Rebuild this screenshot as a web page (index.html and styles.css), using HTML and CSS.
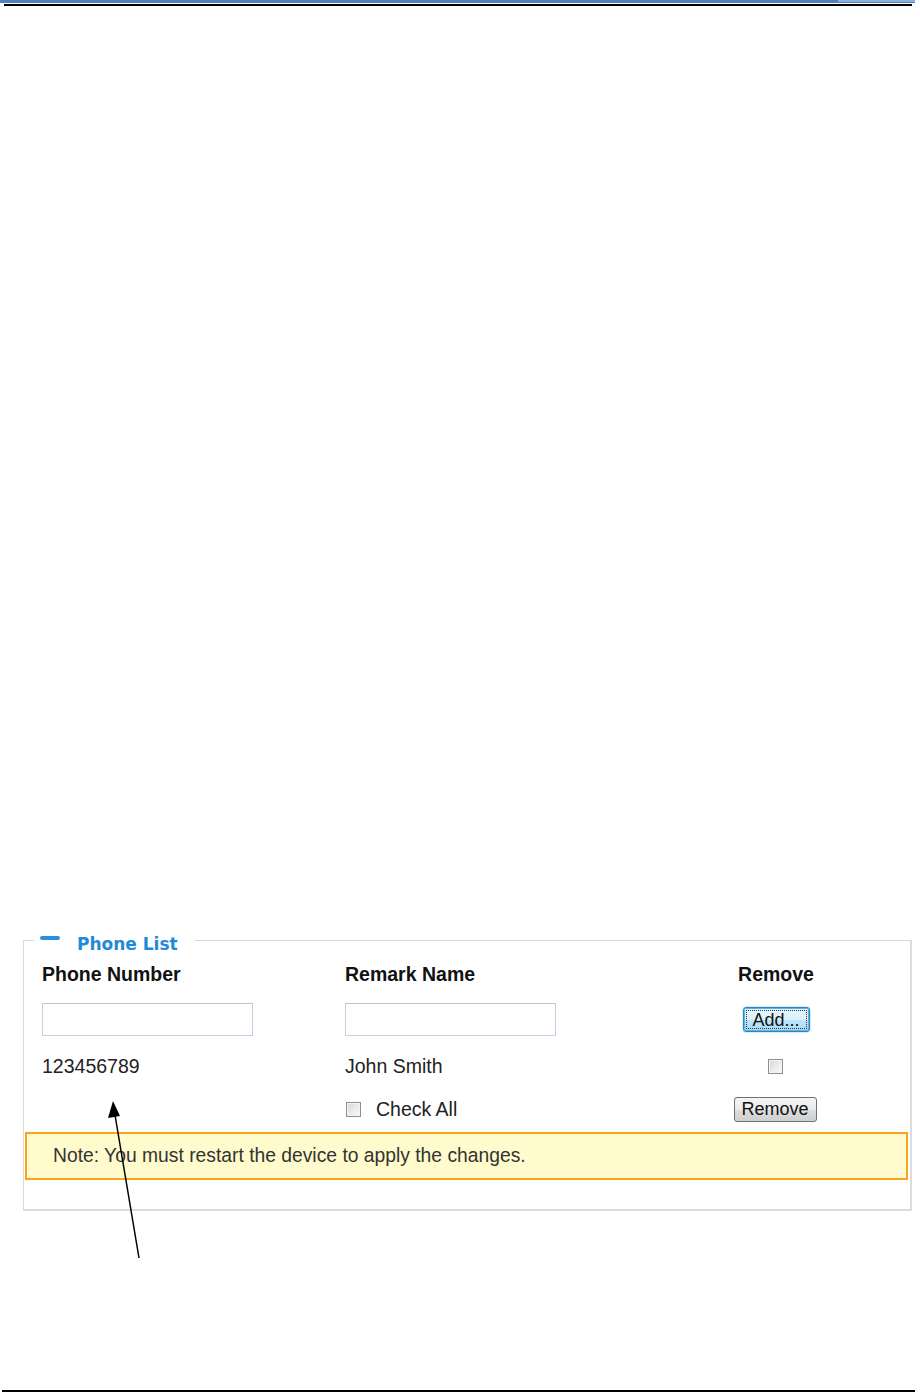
FILE: index.html
```html
<!DOCTYPE html>
<html lang="en">
<head>
<meta charset="utf-8">
<title>Phone List</title>
<link rel="stylesheet" href="styles.css">
</head>
<body>
<div class="page">
  <header class="topbar">
    <div class="band"><span class="accent"></span></div>
    <div class="rule"></div>
  </header>
  <main class="content">
    <fieldset class="phone-list">
      <legend class="legend"><span class="dash"></span><span class="legend-text">Phone List</span></legend>
      <div class="table">
        <div class="row head">
          <div class="c1">Phone Number</div>
          <div class="c2">Remark Name</div>
          <div class="c3">Remove</div>
        </div>
        <div class="row inputs">
          <div class="c1"><input class="field" type="text"></div>
          <div class="c2"><input class="field" type="text"></div>
          <div class="c3"><button class="btn btn-focus" type="button"><span class="focus-ring">Add...</span></button></div>
        </div>
        <div class="row data">
          <div class="c1">123456789</div>
          <div class="c2">John Smith</div>
          <div class="c3"><input class="chk" type="checkbox"></div>
        </div>
        <div class="row check">
          <div class="c1"></div>
          <label class="c2 check-all"><input class="chk" type="checkbox"><span>Check All</span></label>
          <div class="c3"><button class="btn btn-remove" type="button">Remove</button></div>
        </div>
      </div>
      <div class="note">Note: You must restart the device to apply the changes.</div>
    </fieldset>
    <svg class="arrow" width="40" height="170" viewBox="0 0 40 170">
      <line x1="36" y1="163" x2="12" y2="20" stroke="#000" stroke-width="1.5"/>
      <polygon points="10,6 5,23 17,21" fill="#000"/>
    </svg>
  </main>
  <footer class="bottom-rule"></footer>
</div>
</body>
</html>
```
FILE: styles.css
```css
html, body {
  margin: 0;
  padding: 0;
  background: #fff;
}

body {
  font-family: "Liberation Sans", Arial, sans-serif;
  color: #222;
}

.page {
  width: 920px;
  height: 1393px;
  display: flex;
  flex-direction: column;
}

.topbar {
  display: flex;
  flex-direction: column;
}

.band {
  width: 915px;
  height: 3px;
  background: #4f81bd;
  display: flex;
  justify-content: flex-end;
}

.accent {
  width: 77px;
  height: 2px;
  background: #8eb0dc;
}

.rule {
  margin: 1px 0 0 4px;
  width: 908px;
  height: 2px;
  background: #000;
}

.content {
  flex: 1;
  position: relative;
  padding-top: 922px;
}

.phone-list {
  margin: 0 0 0 23px;
  width: 889px;
  box-sizing: border-box;
  padding: 0 0 29px 0;
  border: 1px solid #d9d9d9;
  border-right: 2px solid #dcdcdc;
  border-bottom: 2px solid #dcdcdc;
  min-inline-size: 0;
}

.legend {
  margin-left: 10px;
  padding: 0 17px 0 6px;
  display: flex;
  align-items: center;
  height: 24px;
}

.dash {
  width: 20px;
  height: 4px;
  border-radius: 2px;
  background: #2a8fdc;
  margin-right: 17px;
  margin-top: -4px;
}

.legend-text {
  font-family: "DejaVu Sans", Verdana, sans-serif;
  font-weight: bold;
  font-size: 17px;
  line-height: 18px;
  margin-top: 8px;
  color: #1f8ad8;
}

.table {
  padding-left: 18px;
  display: flex;
  flex-direction: column;
}

.row {
  display: grid;
  grid-template-columns: 303px 330px 202px;
  align-items: center;
  font-size: 19.5px;
}

.c3 {
  display: flex;
  justify-content: center;
}

.head {
  height: 32px;
  margin-top: 6px;
  font-weight: bold;
  color: #111;
}

.inputs {
  height: 35px;
  margin-top: 12px;
}

.field {
  display: block;
  width: 211px;
  height: 33px;
  box-sizing: border-box;
  border: 1px solid #c5cfdf;
  border-top-color: #b8c4d8;
  background: #fff;
  margin: 0;
  padding: 0 4px;
}

.btn {
  font-family: "Liberation Sans", Arial, sans-serif;
  font-size: 18px;
  color: #111;
  height: 25px;
  padding: 0 8px;
  border: 1px solid #707070;
  border-radius: 3px;
  background: linear-gradient(#f4f4f4 0%, #ebebeb 50%, #dddddd 51%, #cfcfcf 100%);
  display: flex;
  align-items: center;
  justify-content: center;
  line-height: 1;
}

.btn-focus {
  width: 67px;
  height: 25px;
  padding: 0 2px;
  border: 1px solid #3c7fb1;
  box-shadow: 0 0 0 1px #52b7f0 inset, 0 0 2px #62c1f5;
  background: linear-gradient(#eaf6fd 0%, #d9f0fc 50%, #bee6fd 51%, #a7d9f5 100%);
}

.focus-ring {
  display: block;
  width: 100%;
  border: 1px dotted #333;
  padding: 1px 0 0;
  box-sizing: border-box;
  height: 19px;
  line-height: 17px;
}

.data {
  height: 26px;
  margin-top: 16px;
  color: #222;
}

.chk {
  appearance: none;
  -webkit-appearance: none;
  width: 15px;
  height: 15px;
  margin: 0;
  box-sizing: border-box;
  border: 1px solid #8e8f8f;
  background: linear-gradient(135deg, #d6d6d6 0%, #eeeeee 60%, #fafafa 100%);
  box-shadow: inset 0 0 0 1px #f4f4f4;
}

.data .chk {
  margin-left: -2px;
}

.check {
  height: 26px;
  margin-top: 17px;
}

.check-all {
  display: flex;
  align-items: center;
  gap: 15px;
}

.check-all .chk {
  margin-left: 1px;
}

.btn-remove {
  width: 83px;
  margin-left: -2px;
}

.note {
  margin: 10px 2px 0 1px;
  height: 48px;
  box-sizing: border-box;
  background: #fffbcc;
  border: 2px solid #f9a31e;
  padding-left: 26px;
  display: flex;
  align-items: center;
  font-size: 19.3px;
  color: #333;
}

.arrow {
  position: absolute;
  left: 103px;
  top: 1089px;
  overflow: visible;
}

.bottom-rule {
  margin: 0 0 0 2px;
  width: 913px;
  height: 2px;
  background: #000;
  margin-bottom: 1px;
}
```
